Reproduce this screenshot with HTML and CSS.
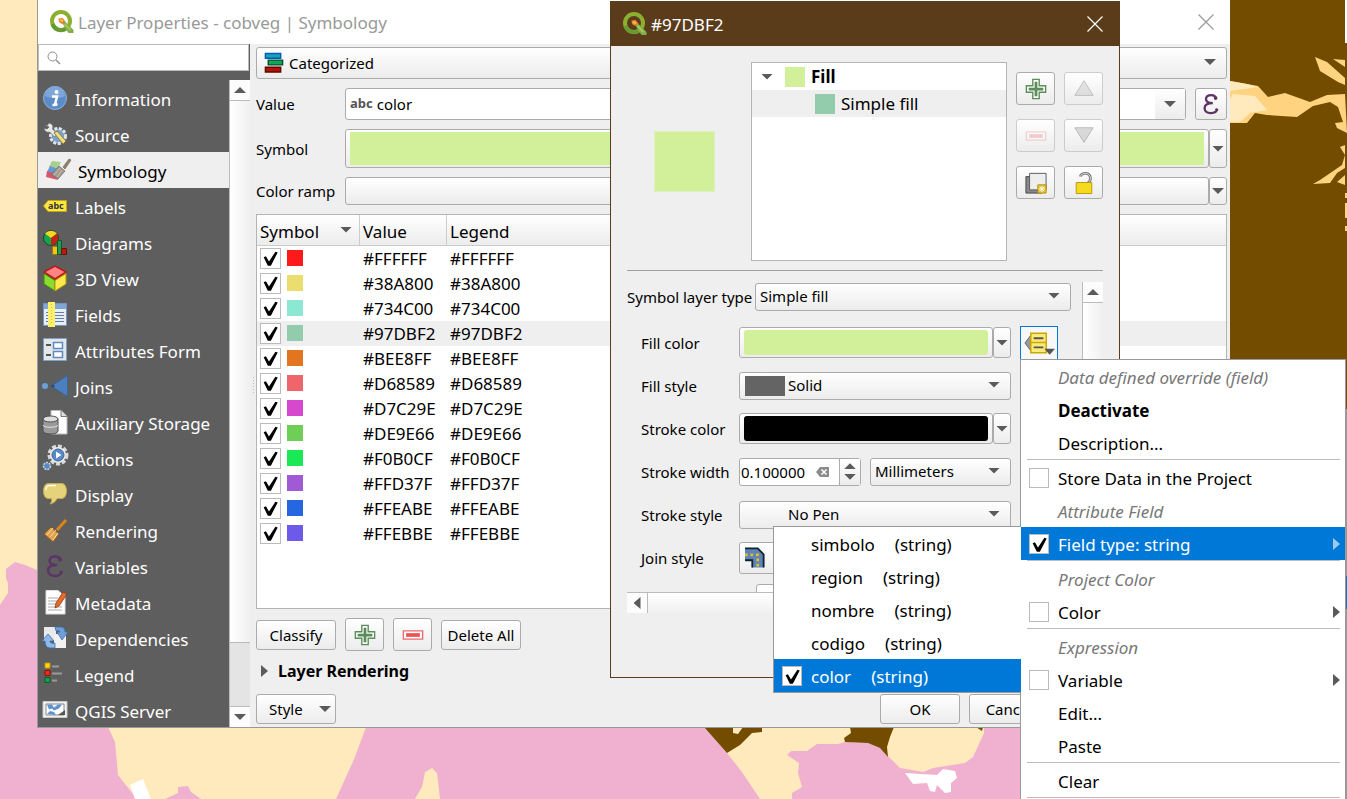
FILE: index.html
```html
<!DOCTYPE html>
<html lang="en">
  <head>
    <meta charset="UTF-8" />
    <meta name="viewport" content="width=device-width, initial-scale=1.0" />
    <title>Layer Properties - cobveg | Symbology</title>
    <link rel="stylesheet" href="styles.css">
  </head>
  <body>
    <!-- shared icons -->
    <svg class="defs" width="0" height="0" aria-hidden="true">
      <symbol id="qgis" viewBox="0 0 24 24">
        <circle cx="11.500" cy="11" r="9" fill="none" stroke="#8bb02f" stroke-width="4" />
        <path d="M3 14a9 9 0 0 0 13 5" fill="none" stroke="#679a30" stroke-width="4" />
        <path d="M12 12l3-1 9 9v3h-5z" fill="#7fae4a" />
        <path d="M15 14l6 6" stroke="#a9c75e" stroke-width="2" />
        <path d="M9 8.500l4-.5 3 3.500-3.500 2.500L9.500 12z" fill="#ec7f2a" />
        <path d="M10.500 10l3 1" stroke="#f9c04a" stroke-width="2" />
      </symbol>
      <symbol id="plus" viewBox="0 0 24 24">
        <path d="M8.500 1.500h7v7h7v7h-7v7h-7v-7h-7v-7h7z" fill="#fff" stroke="#5b8c5a" stroke-width="1.500" />
        <path d="M12 4v16M4 12h16" stroke="#5b8c5a" stroke-width="3" />
      </symbol>
      <symbol id="minus" viewBox="0 0 24 24">
        <path d="M1.500 7.500h21v9h-21z" fill="#fff" stroke="#e96a6e" stroke-width="1.500" />
        <path d="M4.500 12h15" stroke="#ee5054" stroke-width="4" />
      </symbol>
      <symbol id="epsilon" viewBox="0 0 24 24">
        <path d="M17.500 6.500C17 1 7 1 6.500 6.500c0 3.500 3 4.500 7.500 4.500-5 0-9 1.500-9 5.500 0 7 12.500 7 14 1" fill="none" stroke="#5c3566" stroke-width="2.500" />
        <circle cx="17" cy="5.500" r="2" fill="#5c3566" />
        <circle cx="18" cy="18" r="1.500" fill="#5c3566" />
      </symbol>
      <symbol id="cross" viewBox="0 0 16 16">
        <path d="M.5.5l15 15M15.500.5l-15 15" fill="none" stroke="currentColor" stroke-width="1.200" />
      </symbol>
    </svg>

    <svg class="map" viewBox="0 0 1347 799" preserveAspectRatio="xMinYMin slice" aria-hidden="true">
      <rect width="1347" height="799" fill="#ffeabe" />
      <g fill="#f0b0cf">
        <path d="M6 569l9-7 10 3 12 5v11h1v146h70l7 15 3 33 19 24H0V605l8-12V583l-2-5z" />
        <path d="M165 799l13-6v-6l10-1 3 6 10 7z" />
        <path d="M366 727l-11 30-19 42h424l-18-27-15-19-23-26z" />
        <path d="M792 799v-6l10-6-4-14 1-10-12-8 4-4h16l10-7h21l7-2 23 1 12 5 20 20 23 4 10-4 32-5 8-6 11-24v-6h70v72z" />
      </g>
      <path d="M415 799l7-12 3-15 7-4 5 5 3 26z" fill="#ffeabe" />
      <g fill="#734c00">
        <path d="M704 727l23 26 13-8 12-12 10-1v-5h-19l-5 7-5-1v-6z" />
        <path d="M850 727l1 6-7 5 1 4 23 1 12 5 8 9-1-10 3-10 4-10z" />
        <path d="M976 727l6 4 1-4zM1230 0h117v727h-117z" />
      </g>
      <path d="M905 773l32 2 6-6 12 2 2 7-6 5v9l-6 1-8-8-2 7-5-1-3-8-14 1zM130 785l13-6 8 20h-16z" fill="#fff" />
      <g fill="#ffd37f">
        <path d="M1230 81l28 5 10 11 17-4 25 9 17-7 18-1 2 39-10-5-2-5 8-1-5-15-8-5-17 4-16 11-30-2-12-2-8 10h-17z" />
        <path d="M1315 57l12 5 18 16v7l-7-3-18-11zM1333 59l12 1v7z" />
        <path d="M1345 145l-5 2 5 8-3 10-22 15-7 4 17-1 7-10 8-5zM1345 175l-8 7 8 3zM1345 193h2v5h-2zM1345 203h2v15h-2zM1345 226h2v5h-2z" />
      </g>
      <path d="M1230 81l17 3 11 3-28 4zM1230 99l3-5 22 2 12 14-17 3-10 9h-10z" fill="#ffeabe" />
      <path d="M1345 0h2v43h-2zM1345 409h2v390h-2z" fill="#fff" />
      <path d="M1346 409h1v390h-1z" fill="#999" />
      <path d="M1345 576h2v33h-2z" fill="#0078d7" />
    </svg>

    <div class="window layer-properties">
      <header class="titlebar">
        <svg class="logo"><use href="#qgis" /></svg>
        <h1>Layer Properties - cobveg | Symbology</h1>
        <button type="button" class="close" aria-label="Close"><svg><use href="#cross" /></svg></button>
      </header>

      <div class="window-body">
        <aside class="sidebar">
          <div class="search">
            <svg viewBox="0 0 14 14"><circle cx="5.500" cy="5.500" r="4.500" fill="none" stroke="#8c8c8c" /><path d="M9 9l4 4" stroke="#8c8c8c" stroke-width="1.500" /></svg>
            <input type="text" aria-label="Search options" />
          </div>
          <div class="sidebar-list">
            <nav class="tabs">
              <a href="#information">
                <svg viewBox="0 0 24 24"><circle cx="12" cy="12" r="11.500" fill="#5b8cc9" stroke="#8fb3dd" /><path d="M2 10a10 10 0 0 1 20 0c-5 3-15 3-20 0z" fill="#7fa6d8" /><circle cx="13.500" cy="6" r="2" fill="#fff" /><path d="M9 10.500h5l-2 8h2.500M9.500 19h3" fill="none" stroke="#fff" stroke-width="2.500" /></svg>
                Information</a>
              <a href="#source">
                <svg viewBox="0 0 24 24"><circle cx="15" cy="14" r="7.500" fill="#7b9cc4" stroke="#dfe5ea" stroke-width="3" stroke-dasharray="3 1.500" /><circle cx="15" cy="14" r="5.500" fill="#7da2cf" /><path d="M1 3c3 1 5 0 4-2 4 0 6 3 4.500 6l5 5-3 3-5-5C4 11 1 9 1 6l3 1 2-2z" fill="#e8e8e8" stroke="#666" stroke-width=".8" /><path d="M11 11l3-2 9 10-3 3z" fill="#f0dc82" stroke="#8d7a33" /></svg>
                Source</a>
              <a href="#symbology" class="active">
                <svg viewBox="0 0 24 24"><path d="M6 3l9 1-4 8-8-3z" fill="#a7cf8e" /><path d="M4 8l8 3-5 5-6-2z" fill="#5e9ddb" /><path d="M1 13l8 2 3 7-12-3z" fill="#d9566a" /><path d="M13 8l6 5-7 8c-2-2-6-4-7-4z" fill="#a29a8f" stroke="#6e675e" stroke-width=".7" /><path d="M8 17l6-7M11 19l5-7" stroke="#c6beb1" /><path d="M17 9l6-8 2 1-6 9z" fill="#8f8068" stroke="#776b59" stroke-width=".7" /></svg>
                Symbology</a>
              <a href="#labels">
                <svg viewBox="0 0 24 24"><path d="M5 6.500h18.500v11H5L.5 12z" fill="#fbe646" stroke="#c7a500" /><text x="5" y="15" font-size="9" font-weight="bold" fill="#333">abc</text></svg>
                Labels</a>
              <a href="#diagrams">
                <svg viewBox="0 0 24 24"><circle cx="8" cy="8" r="7.500" fill="#15a64d" stroke="#17452a" /><path d="M8 8L2 3.500A8 8 0 0 1 14 3.500z" fill="#f8d621" /><path d="M8 8l6-4.500A8 8 0 0 1 8 15.500z" fill="#c32312" /><path d="M9.500 16.500h5v8h-5z" fill="#f0c419" stroke="#9c7a00" /><path d="M14.500 10.500h4v14h-4z" fill="#1f9d4e" stroke="#0e5a2a" /><path d="M18.500 18.500h5v6h-5z" fill="#b41c12" stroke="#6e0e0a" /></svg>
                Diagrams</a>
              <a href="#3d-view">
                <svg viewBox="0 0 24 24"><path d="M12 0l11 6-11 7L1 6z" fill="#ff8484" stroke="#c01818" stroke-width="1.500" /><path d="M1 7.500l11 7V25L1 18z" fill="#8bdc2e" stroke="#3f8a10" /><path d="M23 7.500l-11 7V25l11-7z" fill="#ffe94d" stroke="#b39a00" /></svg>
                3D View</a>
              <a href="#fields">
                <svg viewBox="0 0 24 24"><path d="M.5 1.500h23v22H.5z" fill="#e9eef4" stroke="#7297c2" /><path d="M1 2h22v5H1z" fill="#7fa6d4" /><path d="M3 10.500h18M3 13.500h18M3 16.500h18M3 19.500h18" stroke="#5e82ad" /><path d="M5 0h7v25H5z" fill="#fdf06a" /><path d="M8.500 2v21" stroke="#c9bb4a" stroke-dasharray="1 2" /></svg>
                Fields</a>
              <a href="#attributes-form">
                <svg viewBox="0 0 24 24"><path d="M.5.5h23v22H.5z" fill="#e4e7ea" stroke="#7da0cc" /><path d="M3 7h5M3 17h5" stroke="#555" stroke-width="2" /><path d="M10.500 4.500h9v6h-9zM10.500 13.500h9v6h-9z" fill="#fff" stroke="#5d8ac2" stroke-width="1.500" /></svg>
                Attributes Form</a>
              <a href="#joins">
                <svg viewBox="0 0 24 24"><circle cx="2" cy="12" r="3" fill="#6ea0da" /><path d="M8 12L24.500 1.500v21z" fill="#4b7fbe" stroke="#3c659b" /><circle cx="10" cy="12" r="1.500" fill="#274c7c" /></svg>
                Joins</a>
              <a href="#auxiliary-storage">
                <svg viewBox="0 0 24 24"><path d="M8 .5h10l6 6V24H8z" fill="#fff" stroke="#bbb" /><path d="M18 .5v6h6" fill="#ddd" stroke="#777" /><path d="M0 9v12c0 4 15 4 15 0V9z" fill="#9a9a9a" stroke="#4d4d4d" /><ellipse cx="7.500" cy="9" rx="7.500" ry="3" fill="#dedede" stroke="#4d4d4d" /><path d="M0 15c0 3 15 3 15 0" fill="none" stroke="#e5e5e5" /></svg>
                Auxiliary Storage</a>
              <a href="#actions">
                <svg viewBox="0 0 24 24"><circle cx="15" cy="9" r="9" fill="none" stroke="#dadada" stroke-width="3" stroke-dasharray="4 2" /><circle cx="15" cy="9" r="8" fill="#eee" /><circle cx="15" cy="9" r="6" fill="#5a8ac6" stroke="#3c659b" /><path d="M13 5.500l5.500 3.500-5.500 3.500z" fill="#fff" /><circle cx="4" cy="20" r="3.500" fill="#5a8ac6" stroke="#cfd6de" stroke-width="1.500" stroke-dasharray="2 1" /></svg>
                Actions</a>
              <a href="#display">
                <svg viewBox="0 0 24 24"><path d="M5 1.500h14c6 0 6 15 0 15h-5c-1 3-4 5-7 5.500 1.500-2 2-3 1.500-5.500H5c-6 0-6-15 0-15z" fill="#e6d27a" stroke="#c2ab4e" /><path d="M3 8c0-4 1-4 5-4.500h5" fill="none" stroke="#fffbe5" stroke-width="1.500" /></svg>
                Display</a>
              <a href="#rendering">
                <svg viewBox="0 0 24 24"><path d="M23 2L14 12" stroke="#d9851a" stroke-width="3" /><path d="M8 9l8 7-6 8-9-8z" fill="#e0a14e" stroke="#8a5a1c" /><path d="M4 17l6-7M7 19l6-7M10 22l5-7" stroke="#fbd9a0" /></svg>
                Rendering</a>
              <a href="#variables"><svg><use href="#epsilon" /></svg> Variables</a>
              <a href="#metadata">
                <svg viewBox="0 0 24 24"><path d="M3 .5h12l7 6V24H3z" fill="#fff" stroke="#ddd" /><path d="M5 8h10M5 11h11M5 14h11M5 17h14M5 20h14" stroke="#aaa" /><path d="M20 2l4 2-8 12-4 2 1-5z" fill="#e56a2c" stroke="#8d3a12" stroke-width=".8" /></svg>
                Metadata</a>
              <a href="#dependencies">
                <svg viewBox="0 0 24 24"><path d="M1 1h12v13H1z" fill="#e8eaec" /><path d="M11 8h12v14H11z" fill="#f1f1f1" /><path d="M12 1h6q4 0 4 5h3l-6 8-5-8h3q0-2-4-1z" fill="#6f9fdb" stroke="#3c6eaa" stroke-width=".8" /><path d="M12 22H7q-5 0-5-7H-1l6-7 6 7H7q0 3 5 2z" fill="#8db8e8" stroke="#3c6eaa" stroke-width=".8" /></svg>
                Dependencies</a>
              <a href="#legend">
                <svg viewBox="0 0 24 24"><path d="M2 1h5v5H2z" fill="#ffd91c" stroke="#c79600" /><path d="M2 8.500h5v5H2z" fill="#ef2a16" stroke="#8a1208" /><path d="M2 15.500h5v5H2z" fill="#12a24b" stroke="#0a5c2a" /><path d="M9 4.500h7M9 11.500h10M9 18.500h5" stroke="#999" stroke-width="2" /></svg>
                Legend</a>
              <a href="#qgis-server">
                <svg viewBox="0 0 24 24"><path d="M0 3.500h24v16H0z" fill="#eef0f2" stroke="#c9c9c9" /><path d="M3 6h18v11H3z" fill="#fff" stroke="#888" /><path d="M4 6.500h5l2 3 4-3h4l-3 4-5 2-2-2-3 1zM4 16l3-3 4 1 2 3z" fill="#5f93cf" /><path d="M22 12v5h-7z" fill="#555" /></svg>
                QGIS Server</a>
            </nav>
            <div class="scrollbar">
              <button type="button" aria-label="Scroll up"><i class="arrow up"></i></button>
              <div class="thumb"></div>
              <div class="track"></div>
              <button type="button" aria-label="Scroll down"><i class="arrow"></i></button>
            </div>
          </div>
        </aside>
        <div class="splitter"></div>

        <main class="content">
          <div class="combo renderer">
            <svg viewBox="0 0 20 22"><path d="M1 1.500h16v5H1z" fill="#0fa5c4" stroke="#0e59b0" stroke-width="1.500" /><path d="M4 8.500h15v5H4z" fill="#0fa85a" stroke="#0a4d2a" stroke-width="1.500" /><path d="M1 16h16v5H1z" fill="#b31205" stroke="#5e0a05" stroke-width="1.500" /></svg>
            <select aria-label="Renderer"><option>Categorized</option></select>
            <i class="arrow"></i>
          </div>

          <div class="field">
            <label for="value">Value</label>
            <div class="expression-box">
              <span class="abc">abc</span>
              <input type="text" id="value" value="color" />
              <button type="button" aria-label="Choose field"><i class="arrow"></i></button>
            </div>
            <button type="button" class="btn epsilon" aria-label="Expression"><svg><use href="#epsilon" /></svg></button>
          </div>
          <div class="field symbol-row">
            <label for="symbol">Symbol</label>
            <button type="button" id="symbol" class="btn color-btn"><span class="color-fill fill-green"></span></button>
            <button type="button" class="btn drop" aria-label="Symbol menu"><i class="arrow"></i></button>
          </div>
          <div class="field ramp-row">
            <label for="ramp">Color ramp</label>
            <button type="button" id="ramp" class="btn color-btn"></button>
            <button type="button" class="btn drop" aria-label="Color ramp menu"><i class="arrow"></i></button>
          </div>

          <div class="table-box">
            <table>
              <thead>
                <tr><th class="col-symbol">Symbol <i class="arrow"></i></th><th class="col-value">Value</th><th>Legend</th></tr>
              </thead>
              <tbody>
                <tr><td><input type="checkbox" aria-label="#FFFFFF" checked /><i class="swatch" style="background:#fd1a1a"></i></td><td>#FFFFFF</td><td>#FFFFFF</td></tr>
                <tr><td><input type="checkbox" aria-label="#38A800" checked /><i class="swatch" style="background:#ebde6e"></i></td><td>#38A800</td><td>#38A800</td></tr>
                <tr><td><input type="checkbox" aria-label="#734C00" checked /><i class="swatch" style="background:#8ce8d2"></i></td><td>#734C00</td><td>#734C00</td></tr>
                <tr class="selected"><td><input type="checkbox" aria-label="#97DBF2" checked /><i class="swatch" style="background:#92ccac"></i></td><td>#97DBF2</td><td>#97DBF2</td></tr>
                <tr><td><input type="checkbox" aria-label="#BEE8FF" checked /><i class="swatch" style="background:#e27620"></i></td><td>#BEE8FF</td><td>#BEE8FF</td></tr>
                <tr><td><input type="checkbox" aria-label="#D68589" checked /><i class="swatch" style="background:#ee666c"></i></td><td>#D68589</td><td>#D68589</td></tr>
                <tr><td><input type="checkbox" aria-label="#D7C29E" checked /><i class="swatch" style="background:#d648ce"></i></td><td>#D7C29E</td><td>#D7C29E</td></tr>
                <tr><td><input type="checkbox" aria-label="#DE9E66" checked /><i class="swatch" style="background:#6ece58"></i></td><td>#DE9E66</td><td>#DE9E66</td></tr>
                <tr><td><input type="checkbox" aria-label="#F0B0CF" checked /><i class="swatch" style="background:#1ae856"></i></td><td>#F0B0CF</td><td>#F0B0CF</td></tr>
                <tr><td><input type="checkbox" aria-label="#FFD37F" checked /><i class="swatch" style="background:#a05ad6"></i></td><td>#FFD37F</td><td>#FFD37F</td></tr>
                <tr><td><input type="checkbox" aria-label="#FFEABE" checked /><i class="swatch" style="background:#2666e0"></i></td><td>#FFEABE</td><td>#FFEABE</td></tr>
                <tr><td><input type="checkbox" aria-label="#FFEBBE" checked /><i class="swatch" style="background:#6e5ae8"></i></td><td>#FFEBBE</td><td>#FFEBBE</td></tr>
              </tbody>
            </table>
          </div>

          <div class="actions">
            <button type="button" class="btn">Classify</button>
            <button type="button" class="btn tool" aria-label="Add class"><svg><use href="#plus" /></svg></button>
            <button type="button" class="btn tool" aria-label="Remove class"><svg><use href="#minus" /></svg></button>
            <button type="button" class="btn">Delete All</button>
          </div>
          <button type="button" class="group-title"><i class="arrow right"></i>Layer Rendering</button>
          <footer class="footer">
            <button type="button" class="btn style-btn">Style <i class="arrow"></i></button>
            <button type="button" class="btn ok">OK</button>
            <button type="button" class="btn">Cancel</button>
          </footer>
        </main>
      </div>
    </div>

    <div class="window symbol-dialog">
      <header class="titlebar">
        <svg class="logo"><use href="#qgis" /></svg>
        <h2>#97DBF2</h2>
        <button type="button" class="close" aria-label="Close"><svg><use href="#cross" /></svg></button>
      </header>
      <div class="dialog-body">
        <div class="symbol-top">
          <div class="preview"><span class="fill-green"></span></div>
          <ul class="tree">
            <li class="parent"><i class="arrow"></i><i class="swatch fill-green"></i>Fill</li>
            <li class="child"><i class="swatch"></i>Simple fill</li>
          </ul>
          <div class="tools">
            <button type="button" class="btn tool" aria-label="Add symbol layer"><svg><use href="#plus" /></svg></button>
            <button type="button" class="btn tool" aria-label="Move up" disabled><svg viewBox="0 0 24 24"><path d="M12 3l10 16H2z" fill="#ccc" stroke="#888" /></svg></button>
            <button type="button" class="btn tool" aria-label="Remove symbol layer" disabled><svg class="faded"><use href="#minus" /></svg></button>
            <button type="button" class="btn tool" aria-label="Move down" disabled><svg viewBox="0 0 24 24"><path d="M12 19L2 3h20z" fill="#bbb" stroke="#777" /></svg></button>
            <button type="button" class="btn tool" aria-label="Duplicate layer"><svg viewBox="0 0 24 24"><path d="M1 5h17v18H1z" fill="#888" stroke="#444" /><path d="M5 1.500h18v18H5z" fill="#eee" stroke="#555" /><path d="M14 14h9v9h-9z" fill="#e5c233" stroke="#b08d00" /><path d="M18.500 15v7M15 18.500h7M16 16l5 5M21 16l-5 5" stroke="#fff" /></svg></button>
            <button type="button" class="btn tool" aria-label="Lock layer color"><svg viewBox="0 0 24 24"><path d="M8 5c1-5 11-5 11 2 0 3-1 4-3 5" fill="none" stroke="#777" stroke-width="3" /><path d="M8 5c1-5 11-5 11 2 0 3-1 4-3 5" fill="none" stroke="#ddd" /><path d="M3.500 11.500h17v12h-17z" fill="#f5da1e" stroke="#b8970a" /></svg></button>
          </div>
        </div>
        <hr />
        <div class="scroll-area">
          <div class="form">
            <div class="layer-type">
              <label for="layer-type">Symbol layer type</label>
              <div class="combo"><select id="layer-type"><option>Simple fill</option></select><i class="arrow"></i></div>
            </div>
            <div class="form-row">
              <label for="fill-color">Fill color</label>
              <button type="button" id="fill-color" class="btn color-btn"><span class="color-fill fill-green"></span></button>
              <button type="button" class="btn drop" aria-label="Fill color menu"><i class="arrow"></i></button>
              <button type="button" class="override" aria-label="Data defined override">
                <svg viewBox="0 0 32 24"><path d="M7 4v16L1 12z" fill="#999" stroke="#666" /><path d="M7 2h16v9.500H7zM7 11.500h16V22H7z" fill="#fbe97a" stroke="#c9a800" stroke-width="1.500" /><path d="M10 7h10M10 16.500h10" stroke="#555" stroke-width="2" /><path d="M21 18h11l-5.500 6z" fill="#555" /></svg>
              </button>
            </div>
            <div class="form-row">
              <label for="fill-style">Fill style</label>
              <div class="combo with-icon"><i class="solid"></i><select id="fill-style"><option>Solid</option></select><i class="arrow"></i></div>
            </div>
            <div class="form-row">
              <label for="stroke-color">Stroke color</label>
              <button type="button" id="stroke-color" class="btn color-btn"><span class="color-fill fill-black"></span></button>
              <button type="button" class="btn drop" aria-label="Stroke color menu"><i class="arrow"></i></button>
            </div>
            <div class="form-row">
              <label for="stroke-width">Stroke width</label>
              <div class="spinbox">
                <input type="text" id="stroke-width" value="0.100000" />
                <svg viewBox="0 0 14 10"><path d="M4 0h9v10H4L0 5z" fill="#8c8c8c" /><path d="M5.500 2.500l5 5M10.500 2.500l-5 5" stroke="#fff" stroke-width="1.500" /></svg>
                <div class="steps">
                  <button type="button" aria-label="Increase"><i class="arrow up"></i></button>
                  <button type="button" aria-label="Decrease"><i class="arrow"></i></button>
                </div>
              </div>
              <div class="combo"><select aria-label="Stroke width unit"><option>Millimeters</option></select><i class="arrow"></i></div>
            </div>
            <div class="form-row">
              <label for="stroke-style">Stroke style</label>
              <div class="combo with-icon"><select id="stroke-style"><option>No Pen</option></select><i class="arrow"></i></div>
            </div>
            <div class="form-row join-row">
              <label for="join-style">Join style</label>
              <div class="combo"><svg viewBox="0 0 22 22"><path d="M0 1h14l6.500 6.500V22H8v-8H0z" fill="#5d83b8" /><path d="M0 1h14l6.500 6.500V22M0 14h8v8" fill="none" stroke="#10242c" stroke-width="2" /><path d="M0 8h14v14" fill="none" stroke="#e2c020" stroke-width="3" stroke-dasharray="3 3" /></svg><select id="join-style"><option>Bevel</option></select><i class="arrow"></i></div>
            </div>
            <div class="next-row"><input type="text" aria-label="Offset" /></div>
          </div>
          <div class="scrollbar">
            <button type="button" aria-label="Scroll up"><i class="arrow up"></i></button>
            <div class="thumb"></div>
          </div>
        </div>
        <div class="scrollbar horizontal">
          <button type="button" aria-label="Scroll left"><i class="arrow left"></i></button>
          <div class="thumb"></div>
        </div>
      </div>
    </div>

    <div class="menu override-menu">
      <div class="menu-title">Data defined override (field)</div>
      <button type="button"><b>Deactivate</b></button>
      <button type="button">Description...</button>
      <hr />
      <label><input type="checkbox" />Store Data in the Project</label>
      <div class="menu-title">Attribute Field</div>
      <label class="current"><input type="checkbox" checked />Field type: string<i class="arrow right"></i></label>
      <hr />
      <div class="menu-title">Project Color</div>
      <label><input type="checkbox" />Color<i class="arrow right"></i></label>
      <hr />
      <div class="menu-title">Expression</div>
      <label><input type="checkbox" />Variable<i class="arrow right"></i></label>
      <button type="button">Edit...</button>
      <button type="button">Paste</button>
      <hr />
      <button type="button">Clear</button>
      <hr />
    </div>

    <div class="menu field-menu">
      <button type="button">simbolo <span>(string)</span></button>
      <button type="button">region <span>(string)</span></button>
      <button type="button">nombre <span>(string)</span></button>
      <button type="button">codigo <span>(string)</span></button>
      <label class="current"><input type="checkbox" checked />color <span>(string)</span></label>
    </div>
  </body>
</html>
```
FILE: styles.css
```css
* {
  box-sizing: border-box;
}
body {
  margin: 0;
  height: 100vh;
  position: relative;
  overflow: hidden;
  font-family: "Noto Sans", sans-serif;
  font-size: 15px;
  color: #000;
}
button,
input,
select {
  font: inherit;
  color: inherit;
  margin: 0;
  padding: 0;
  border: none;
  outline: none;
}
button {
  background: none;
}
svg {
  display: block;
  flex: none;
  overflow: visible;
}
.defs,
.map {
  position: absolute;
}
.map {
  inset: 0;
  width: 100%;
  height: 100%;
}

/* small triangles */
.arrow {
  display: block;
  flex: none;
  width: 12px;
  height: 6px;
  background: #5a5a5a;
  clip-path: polygon(0 0, 100% 0, 50% 100%);
}
.arrow.up {
  clip-path: polygon(50% 0, 100% 100%, 0 100%);
}
.arrow.right,
.arrow.left {
  width: 7px;
  height: 12px;
  clip-path: polygon(0 0, 100% 50%, 0 100%);
}
.arrow.left {
  clip-path: polygon(100% 0, 100% 100%, 0 50%);
}

.fill-green {
  background: #d2f09a;
}
.fill-black {
  background: #000;
}

/* windows */
.window {
  position: absolute;
  display: flex;
  flex-direction: column;
  background: #efefef;
}
.layer-properties {
  left: 37px;
  right: 117px;
  top: 0;
  height: 728px;
  border: 1px solid #999;
  border-width: 0 0 1px 1px;
}
.titlebar {
  display: flex;
  align-items: center;
  height: 44px;
  padding: 0 16px 0 11px;
  background: #fff;
  color: #999;
  flex: none;
}
.titlebar h1,
.titlebar h2 {
  flex: 1;
  margin: 0 0 0 4px;
  font-size: 17px;
  font-weight: normal;
}
.logo {
  width: 25px;
  height: 24px;
}
.close svg {
  width: 16px;
  height: 16px;
}
.window-body {
  flex: 1;
  display: flex;
  min-height: 0;
}

/* sidebar */
.sidebar {
  width: 212px;
  display: flex;
  flex-direction: column;
  background: #5e5e5e;
}
.search {
  display: flex;
  align-items: center;
  height: 27px;
  margin: 0 1px 9px 0;
  padding-left: 8px;
  background: #fff;
  border: 1px solid #bbb;
}
.search svg {
  width: 14px;
  height: 14px;
}
.search input {
  flex: 1;
  min-width: 0;
}
.sidebar-list {
  flex: 1;
  display: flex;
  min-height: 0;
}
.tabs {
  flex: 1;
  overflow: hidden;
}
.tabs a {
  display: flex;
  align-items: center;
  gap: 8px;
  height: 36px;
  padding: 2px 0 0 5px;
  font-size: 17px;
  color: #fff;
  text-decoration: none;
}
.tabs a svg {
  width: 24px;
  height: 24px;
  margin-bottom: 2px;
}
.tabs a.active {
  background: #efefef;
  color: #000;
  padding-left: 8px;
}
.scrollbar {
  display: flex;
  flex-direction: column;
  width: 21px;
  background: #fcfcfc;
  border-left: 1px solid #bbb;
}
.scrollbar button {
  display: flex;
  align-items: center;
  justify-content: center;
  height: 20px;
  flex: none;
}
.scrollbar .thumb {
  flex: 1;
  border: 1px solid #bbb;
  border-width: 1px 0;
  background: linear-gradient(90deg, #fff, #f0f0f0);
}
.scrollbar .track {
  height: 64px;
  background: #e4e4e4;
  border-bottom: 1px solid #bbb;
}
.splitter {
  width: 6px;
  background: repeating-linear-gradient(#bbb 0 1px, transparent 1px 3px) 3px center / 1px 18px no-repeat;
}

/* controls */
.btn {
  display: flex;
  align-items: center;
  justify-content: center;
  height: 30px;
  min-width: 80px;
  flex: none;
  background: linear-gradient(#fff, #ececec);
  border: 1px solid #ababab;
  border-radius: 3px;
}
.btn.tool {
  width: 39px;
  min-width: 0;
  height: 33px;
}
.btn.tool svg {
  width: 22px;
  height: 22px;
}
.btn:disabled {
  border-color: #ccc;
}
.btn:disabled svg {
  opacity: 0.5;
}
.btn:disabled .faded {
  opacity: 0.25;
}
.btn.drop {
  width: 18px;
  min-width: 0;
  height: 100%;
}
.btn.color-btn {
  flex: 1;
  min-width: 0;
  height: 100%;
  padding: 2px 4px;
}
.color-fill {
  flex: 1;
  height: 100%;
}
.combo {
  position: relative;
  flex: 1;
  height: 28px;
}
.combo select {
  appearance: none;
  width: 100%;
  height: 100%;
  padding: 0 0 1px 4px;
  background: linear-gradient(#fff, #ececec);
  border: 1px solid #ababab;
  border-radius: 3px;
}
.combo .arrow {
  position: absolute;
  right: 11px;
  top: calc(50% - 4px);
}
.combo svg {
  position: absolute;
  left: 8px;
  top: 5px;
  width: 20px;
  height: 21px;
}
input[type="checkbox"] {
  appearance: none;
  flex: none;
  width: 21px;
  height: 21px;
  background: #fff;
  border: 1px solid #bbb;
}
input[type="checkbox"]:checked::before {
  content: "";
  display: block;
  width: 19px;
  height: 19px;
  background: #000;
  clip-path: polygon(14% 44%, 26% 38%, 42% 66%, 76% 14%, 88% 18%, 52% 88%, 36% 88%);
}
.swatch {
  display: block;
  flex: none;
  width: 16px;
  height: 16px;
}

/* main pane */
.content {
  flex: 1;
  display: flex;
  flex-direction: column;
  gap: 9px;
  padding: 3px 3px 3px 0;
  min-width: 0;
}
.renderer {
  flex: none;
  height: 32px;
}
.renderer select {
  padding-left: 32px;
}
.field {
  display: flex;
  align-items: center;
  height: 32px;
}
.field label {
  width: 89px;
}
.symbol-row {
  height: 39px;
}
.ramp-row {
  height: 28px;
}
.expression-box {
  flex: 1;
  display: flex;
  align-items: center;
  height: 100%;
  margin-right: 9px;
  background: #fff;
  border: 1px solid #ababab;
  border-radius: 3px;
}
.expression-box input {
  flex: 1;
}
.expression-box button {
  display: flex;
  align-items: center;
  justify-content: center;
  width: 30px;
  height: 100%;
  background: linear-gradient(#fff, #ececec);
}
.abc {
  margin: 0 4px 2px 4px;
  font-size: 13px;
  font-weight: bold;
  color: #555;
}
.btn.epsilon {
  width: 32px;
  min-width: 0;
  height: 100%;
}
.epsilon svg {
  width: 22px;
  height: 22px;
}
.table-box {
  flex: 1;
  background: #fff;
  border: 1px solid #b4b4b4;
}
table {
  width: 100%;
  table-layout: fixed;
  border-collapse: separate;
  border-spacing: 0;
  font-size: 17px;
}
th {
  height: 31px;
  padding: 2px 3px 0;
  text-align: left;
  font-weight: normal;
  background: linear-gradient(#fff, #ececec);
  border: 1px solid #ccc;
  border-width: 0 1px 1px 0;
}
th:last-child {
  border-right: none;
}
th .arrow {
  float: right;
  margin: 7px 4px 0 0;
}
.col-symbol {
  width: 103px;
}
.col-value {
  width: 87px;
}
td {
  height: 25px;
  padding: 0 3px;
  line-height: 25px;
}
td:first-child {
  display: flex;
  align-items: center;
  gap: 6px;
}
td .swatch {
  margin-bottom: 2px;
}
.selected {
  background: #efefef;
}
.actions {
  display: flex;
  align-items: center;
  gap: 9px;
}
.group-title {
  display: flex;
  align-items: center;
  gap: 10px;
  height: 25px;
  padding: 0 0 3px 5px;
  font-size: 16px;
  font-weight: bold;
}
.footer {
  display: flex;
  gap: 9px;
  padding-right: 178px;
}
.style-btn {
  justify-content: space-between;
  padding: 0 4px 0 12px;
}
.footer .ok {
  margin-left: auto;
}

/* symbol dialog */
.symbol-dialog {
  left: 610px;
  top: 1px;
  width: 510px;
  height: 677px;
  border: 1px solid #5a3c1b;
}
.symbol-dialog .titlebar {
  background: #5a3c1b;
  color: #fff;
}
.dialog-body {
  flex: 1;
  padding: 16px;
}
.symbol-top {
  display: flex;
  gap: 9px;
  height: 199px;
}
.preview {
  width: 115px;
  display: flex;
  align-items: center;
  justify-content: center;
}
.preview span {
  width: 61px;
  height: 61px;
  border: 1px solid #def0bc;
}
.tree {
  flex: 1;
  margin: 0;
  padding: 0;
  list-style: none;
  background: #fff;
  border: 1px solid #b4b4b4;
}
.tree li {
  display: flex;
  align-items: center;
  gap: 6px;
  height: 27px;
  font-size: 17px;
}
.tree .swatch {
  width: 20px;
  height: 20px;
}
.tree .parent {
  padding-left: 9px;
  font-weight: bold;
}
.tree .parent .arrow {
  margin-right: 6px;
}
.tree .child {
  padding-left: 63px;
  background: #efefef;
}
.child .swatch {
  background: #92ccac;
}
.tools {
  display: grid;
  grid-template-columns: 39px 39px;
  gap: 14px 9px;
  align-content: start;
  padding-top: 10px;
}
.dialog-body hr {
  margin: 9px 0 11px;
  border: none;
  border-top: 1px solid #a0a0a0;
}
.scroll-area {
  display: flex;
  height: 310px;
  overflow: hidden;
}
.form {
  flex: 1;
  padding-right: 11px;
}
.layer-type {
  display: flex;
  align-items: center;
  height: 29px;
  margin-bottom: 10px;
}
.layer-type label {
  width: 128px;
  white-space: nowrap;
}
.form-row {
  position: relative;
  display: flex;
  align-items: center;
  height: 43px;
  padding: 0 60px 0 14px;
}
.form-row label {
  width: 98px;
}
.form-row .btn {
  height: 31px;
}
.form-row .color-fill {
  border-radius: 3px;
}
.override {
  position: absolute;
  left: 393px;
  width: 38px;
  height: 34px;
  padding: 0 2px 0 3px;
  background: #f7f7f7;
  border: 1px solid #0078d7;
}
.override svg {
  width: 31px;
  height: 24px;
}
.with-icon select {
  padding-left: 48px;
}
.solid {
  position: absolute;
  left: 6px;
  top: 4px;
  width: 40px;
  height: 20px;
  background: #646464;
}
.spinbox {
  display: flex;
  align-items: center;
  width: 122px;
  height: 28px;
  margin-right: 9px;
  background: #fff;
  border: 1px solid #ababab;
  border-radius: 3px;
}
.spinbox input {
  width: 69px;
  padding-left: 1px;
}
.spinbox svg {
  width: 14px;
  height: 10px;
  margin: 0 9px 0 7px;
}
.steps {
  flex: 1;
  height: 100%;
  display: flex;
  flex-direction: column;
  justify-content: space-evenly;
  align-items: center;
  border-left: 1px solid #ababab;
  background: linear-gradient(#fff, #ececec);
}
.join-row .combo {
  height: 32px;
}
.join-row select {
  padding-left: 34px;
}
.join-row svg {
  left: 6px;
}
.next-row {
  padding: 5px 60px 0 129px;
}
.next-row input {
  width: 100%;
  height: 28px;
  border: 1px solid #ababab;
  border-radius: 3px;
}
.scrollbar.horizontal {
  flex-direction: row;
  width: auto;
  height: 21px;
  border-left: none;
  border-top: 1px solid #bbb;
}
.horizontal button {
  width: 20px;
}
.horizontal .thumb {
  border-width: 0 1px;
  background: linear-gradient(#fff, #f0f0f0);
}

/* popup menus */
.menu {
  position: absolute;
  display: flex;
  flex-direction: column;
  background: #fff;
  border: 1px solid #999;
  font-size: 17px;
}
.menu button,
.menu label,
.menu-title {
  display: flex;
  align-items: center;
  height: 33px;
  flex: none;
  padding: 1px 5px 0 37px;
}
.menu-title {
  font-style: italic;
  color: #787878;
}
.menu input {
  margin: 0 9px 0 -29px;
  width: 20px;
  height: 20px;
}
.menu .arrow {
  margin-left: auto;
}
.menu .current {
  background: #0078d7;
  color: #fff;
}
.menu .current input {
  color: #000;
}
.menu .current .arrow {
  background: #9cc9ef;
}
.menu hr {
  width: auto;
  margin: 0 5px 1px 6px;
  border: none;
  border-top: 1px solid #bdbdbd;
}
.override-menu {
  left: 1020px;
  top: 359px;
  width: 326px;
  bottom: -2px;
}
.field-menu {
  left: 773px;
  top: 526px;
  width: 248px;
  border-right: none;
}
.menu span {
  margin-left: 20px;
}
```
